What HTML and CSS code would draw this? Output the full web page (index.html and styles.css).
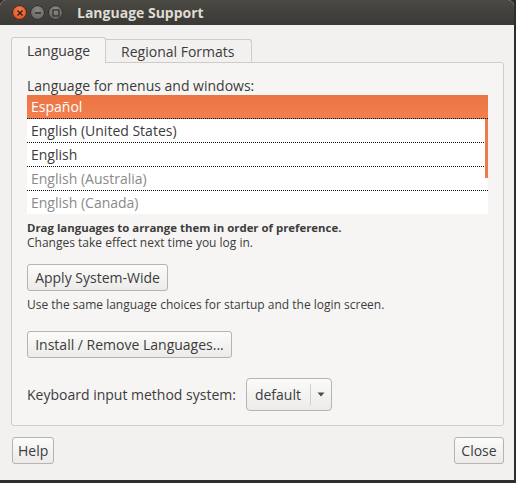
FILE: index.html
```html
<!DOCTYPE html>
<html>
<head>
<meta charset="utf-8">
<link rel="stylesheet" href="styles.css">
</head>
<body>
<div class="window">
  <div class="titlebar">
    <div class="wbtns">
      <span class="wb close"><svg width="8" height="8" viewBox="0 0 8 8"><path d="M1.5 1.5L6.5 6.5M6.5 1.5L1.5 6.5" stroke="#3a1a0e" stroke-width="1.4"/></svg></span>
      <span class="wb"><svg width="8" height="8" viewBox="0 0 8 8"><path d="M1 4H7" stroke="#2e2d2a" stroke-width="1.4"/></svg></span>
      <span class="wb"><svg width="8" height="8" viewBox="0 0 8 8"><rect x="1" y="1" width="6" height="6" fill="none" stroke="#2e2d2a" stroke-width="1.2"/></svg></span>
    </div>
    <div class="title">Language Support</div>
  </div>
  <div class="content">
    <div class="tabs">
      <div class="tab active">Language</div>
      <div class="tab">Regional Formats</div>
    </div>
    <div class="frame">
      <div class="label">Language for menus and windows:</div>
      <div class="list">
        <div class="row sel">Español</div>
        <div class="row">English (United States)</div>
        <div class="row">English</div>
        <div class="row dim">English (Australia)</div>
        <div class="row dim last">English (Canada)</div>
        <div class="scroll"></div>
      </div>
      <div class="hint"><div class="hb">Drag languages to arrange them in order of preference.</div><div class="hl">Changes take effect next time you log in.</div></div>
      <div class="btn apply">Apply System-Wide</div>
      <div class="note">Use the same language choices for startup and the login screen.</div>
      <div class="btn install">Install / Remove Languages...</div>
      <div class="kbd">
        <span>Keyboard input method system:</span>
        <div class="combo"><span class="cval">default</span><span class="csep"></span><svg width="8" height="5" viewBox="0 0 8 5"><path d="M0.5 0.5H7.5L4 4.5Z" fill="#4c4c4c"/></svg></div>
      </div>
    </div>
    <div class="bottom">
      <div class="btn small">Help</div>
      <div class="btn small wide">Close</div>
    </div>
  </div>
</div>
</body>
</html>
```
FILE: styles.css
```css
html, body { margin: 0; padding: 0; }
body {
  background: #2f2e2b;
  width: 516px;
  height: 483px;
  overflow: hidden;
  font-family: "Open Sans", "DejaVu Sans", sans-serif;
  color: #3c3c3c;
}
.window {
  width: 514px;
  height: 480px;
  background: #f2f1f0;
  border-radius: 6px 6px 0 0;
  overflow: hidden;
  display: flex;
  flex-direction: column;
}
.titlebar {
  height: 25px;
  background: linear-gradient(#4a4944, #3a3935);
  display: flex;
  align-items: center;
  flex-shrink: 0;
}
.wbtns { display: flex; gap: 3px; padding-left: 12px; }
.wb {
  width: 15px; height: 15px; border-radius: 50%;
  background: radial-gradient(circle at 50% 35%, #8a8983, #5a5955);
  display: flex; align-items: center; justify-content: center;
  box-shadow: inset 0 0 0 1px #2e2d2a;
}
.wb.close { background: radial-gradient(circle at 50% 35%, #f57a4e, #dd4814); }
.title {
  margin-left: 14px;
  color: #dfdbd2;
  font-weight: bold;
  font-size: 14px;
}
.content { flex: 1; padding: 11px 10px 0 11px; display: flex; flex-direction: column; }
.tabs { display: flex; align-items: flex-end; height: 26px; font-size: 14px; }
.tab {
  height: 22px;
  padding: 0 17px 0 15px;
  display: flex; align-items: center;
  border: 1px solid #cfcbc6;
  border-bottom: none;
  border-left: none;
  border-radius: 0 3px 0 0;
  color: #3c3c3c;
}
.tab.active {
  height: 25px;
  background: #f6f5f4;
  border-left: 1px solid #cfcbc6;
  border-radius: 3px 3px 0 0;
  padding: 0 15px;
  position: relative;
  margin-bottom: -1px;
  z-index: 1;
}
.frame {
  height: 364px;
  border: 1px solid #cfcbc6;
  border-radius: 0 3px 3px 3px;
  background: #f6f5f4;
  padding: 14px 15px 0 15px;
  box-sizing: border-box;
  font-size: 14px;
}
.label { line-height: 18px; }
.list {
  position: relative;
  width: 461px;
  background: #fff;
}
.row {
  height: 24px;
  line-height: 23px;
  padding-left: 4px;
  border-bottom: 1px dotted #111;
  box-sizing: border-box;
}
.row.last { border-bottom: none; height: 23px; }
.row.sel { background: linear-gradient(#ec7443, #f2804f); color: #fff; border-bottom-color: #111; }
.row.dim { color: #8a8a8a; }
.scroll { position: absolute; right: 0; top: 24px; width: 3px; height: 59px; background: #ed7b4a; }
.hint { margin-top: 6px; color: #3c3c3c; }
.hb { font-weight: bold; font-size: 11.4px; height: 15px; line-height: 15px; }
.hl { font-size: 12px; height: 16px; line-height: 16px; }
.btn {
  display: inline-flex; align-items: center; justify-content: center;
  border: 1px solid #b7b3ae;
  border-radius: 3px;
  background: linear-gradient(#fbfbfa, #ecebe9);
  box-sizing: border-box;
  font-size: 14px;
  color: #3c3c3c;
}
.apply { width: 141px; height: 27px; margin-top: 13px; }
.note { font-size: 12px; margin-top: 6px; line-height: 15px; }
.install { width: 205px; height: 27px; margin-top: 19px; }
.kbd { display: flex; align-items: center; margin-top: 20px; gap: 10px; }
.combo {
  width: 86px; height: 33px;
  border: 1px solid #b7b3ae; border-radius: 4px;
  background: linear-gradient(#fbfbfa, #ecebe9);
  box-sizing: border-box;
  display: flex; align-items: center; padding-left: 8px;
}
.cval { width: 55px; }
.csep { width: 1px; height: 21px; background: #d3d0cc; margin-right: 6px; }
.bottom { display: flex; justify-content: space-between; margin-top: 11px; padding-left: 1px; }
.small { height: 27px; padding: 0 5px; }
.small.wide { padding: 0 6px; width: 50px; }
```
